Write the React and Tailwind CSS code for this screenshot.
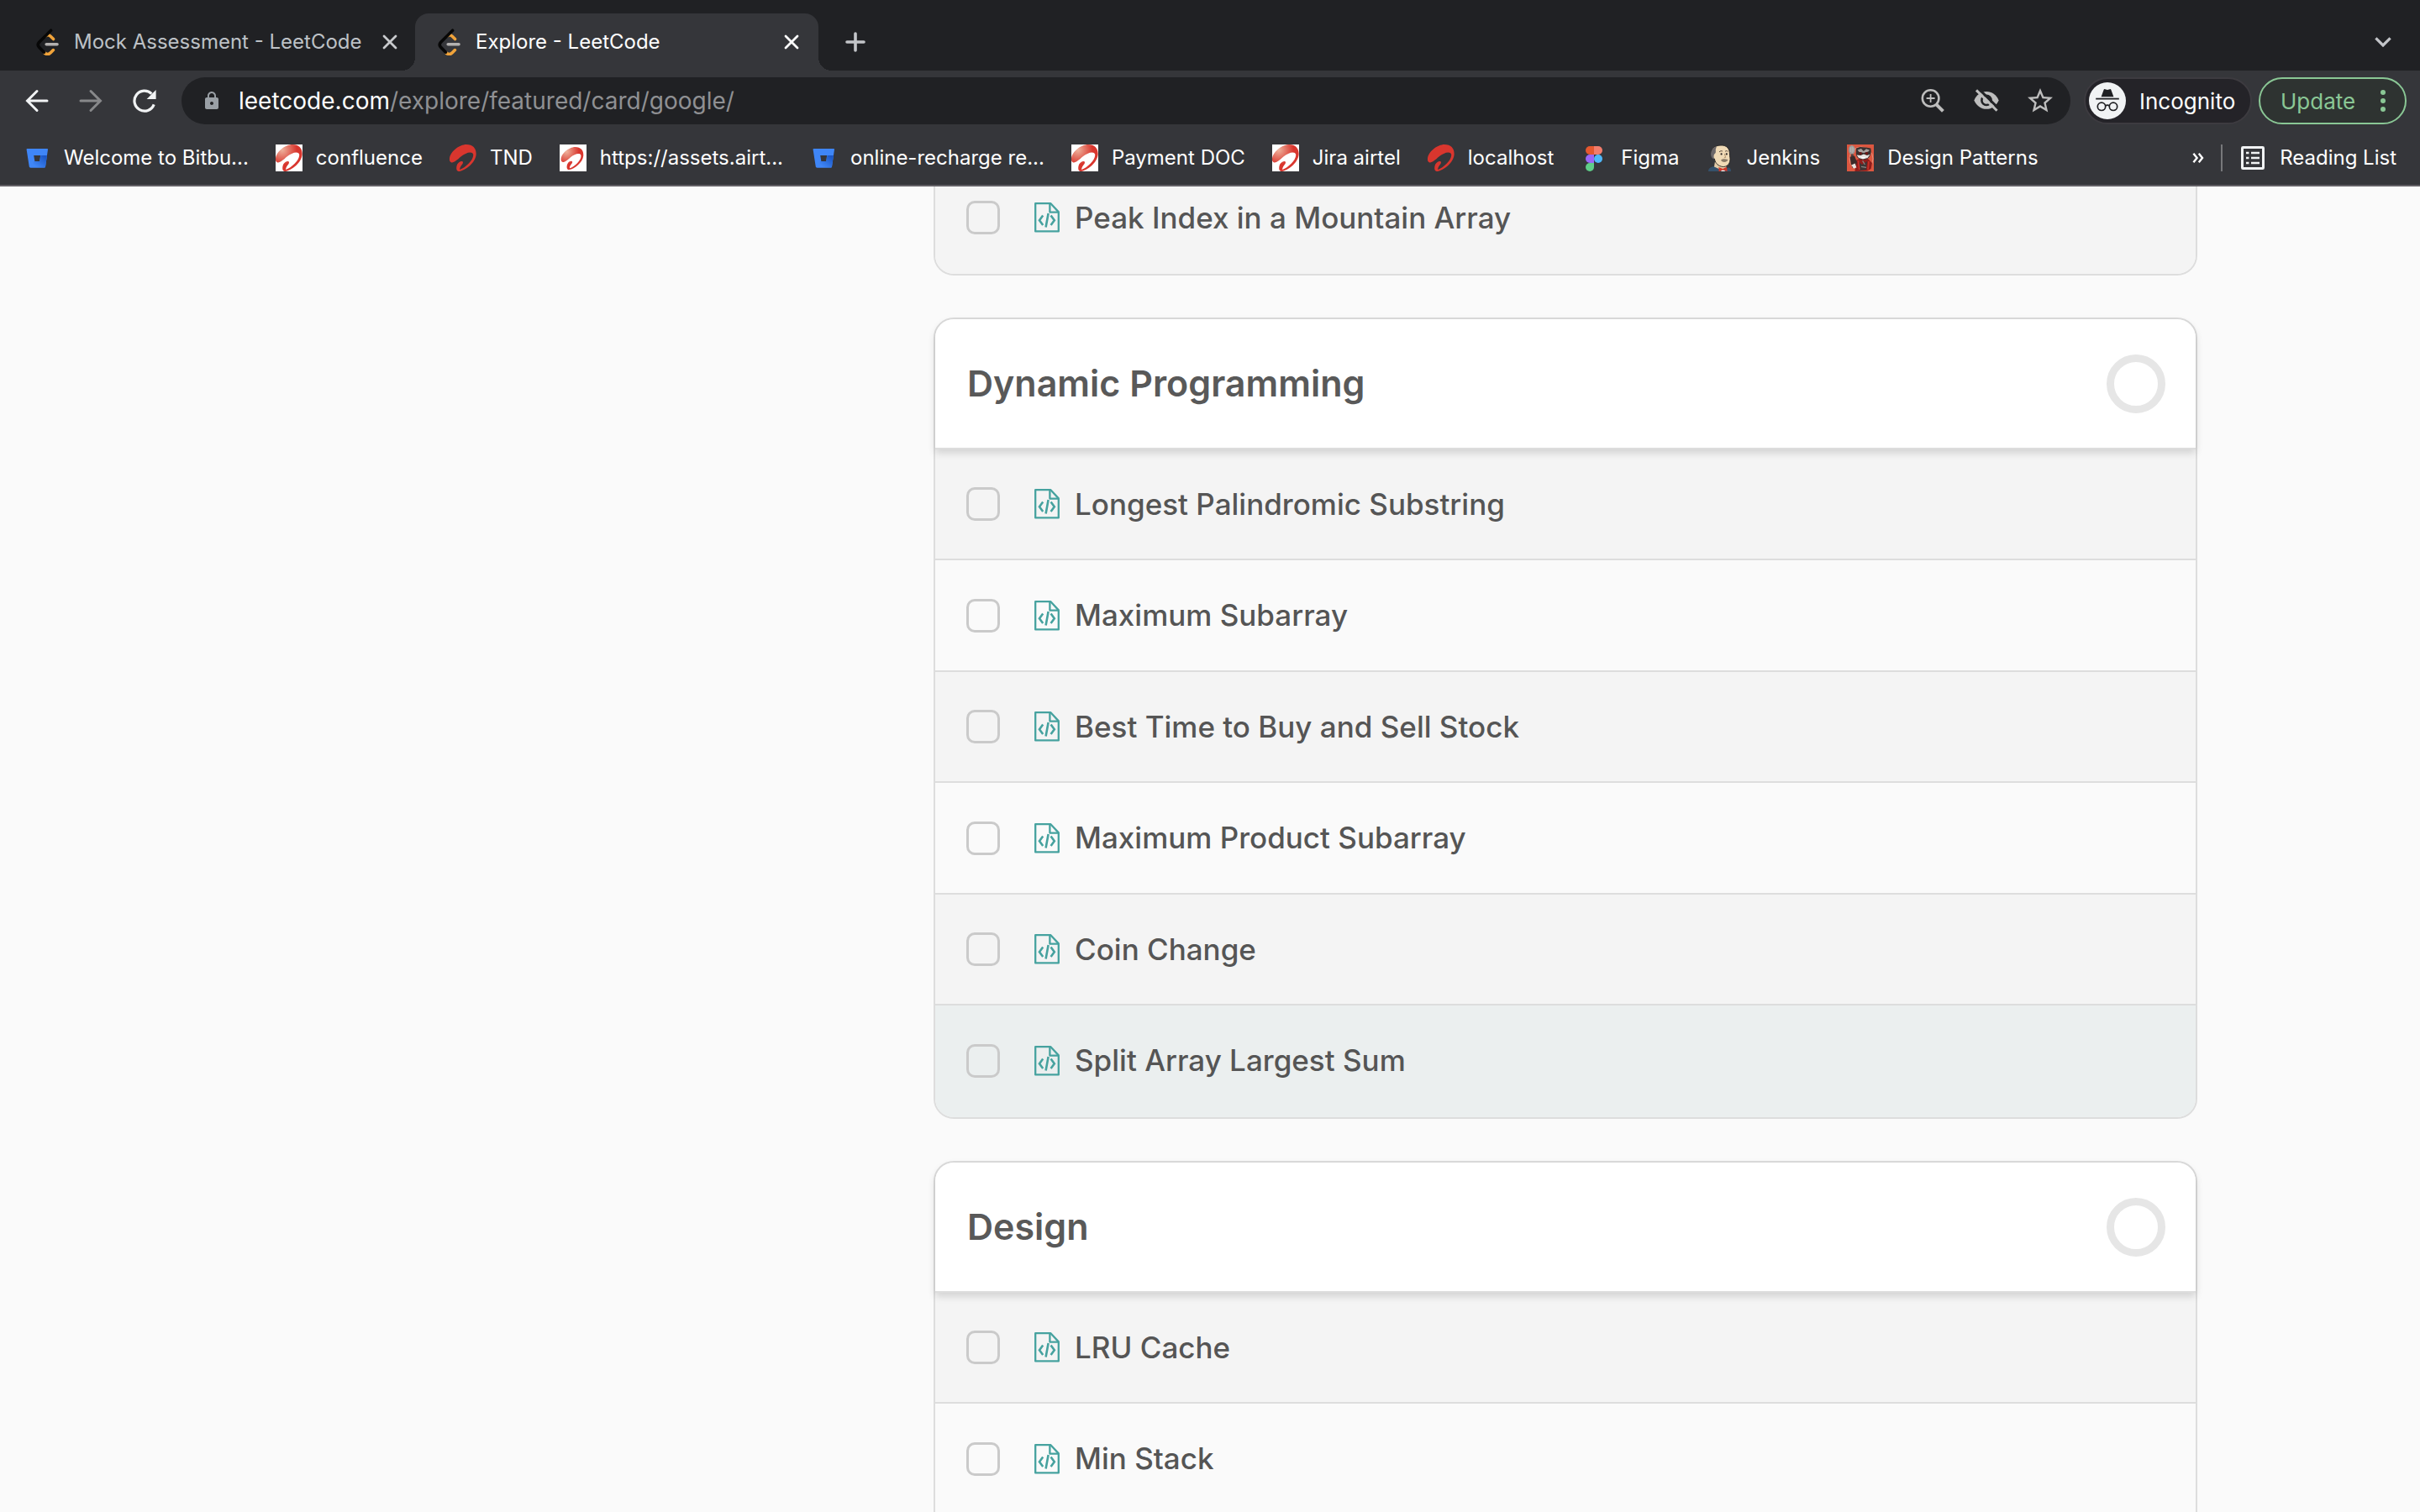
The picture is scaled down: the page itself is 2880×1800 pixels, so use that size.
import { MdLock, MdStarBorder } from "react-icons/md";

const sections = [
  { items: ["Peak Index in a Mountain Array"] },
  {
    title: "Dynamic Programming",
    items: [
      "Longest Palindromic Substring",
      "Maximum Subarray",
      "Best Time to Buy and Sell Stock",
      "Maximum Product Subarray",
      "Coin Change",
      "Split Array Largest Sum",
    ],
    active: "Split Array Largest Sum",
  },
  { title: "Design", items: ["LRU Cache", "Min Stack"], open: true },
];

function LeetCodeIcon() {
  return (
    <svg className="size-8 shrink-0" viewBox="0 0 32 32" fill="none" strokeWidth="3.6" strokeLinecap="round">
      <path d="M13 29C16 31.4 18.8 30.4 20.5 28.6L23.4 25.6" stroke="#f0a33a" />
      <path d="M14.5 8.6C17 6.6 18.5 7.6 20 9L23.6 12.6" stroke="#f0a33a" />
      <path d="M20.6 2.2L6.6 16.2C4.7 18.2 4.9 20.2 6.4 22L12.4 28.2" stroke="#070707" />
      <path d="M15.2 18.8H28" stroke="#b3b1b0" />
    </svg>
  );
}

function CloseIcon({ className }) {
  return (
    <svg className={className} viewBox="0 0 18 18" fill="none" stroke="currentColor" strokeWidth="2.8" strokeLinecap="round">
      <path d="M2 2L16 16M16 2L2 16" />
    </svg>
  );
}

function BitbucketIcon() {
  return (
    <svg className="size-8 shrink-0" viewBox="0 0 32 32">
      <defs>
        <linearGradient id="bb" x1="1" y1="0.2" x2="0.3" y2="0.9">
          <stop offset="0" stopColor="#1a56c4" />
          <stop offset="1" stopColor="#3f86f7" />
        </linearGradient>
      </defs>
      <path d="M4.4 5H28.2Q29.2 5 29 6L26 26.4Q25.9 27.4 24.9 27.4H8Q7 27.4 6.8 26.4L3.6 6Q3.4 5 4.4 5Z" fill="#3f86f7" />
      <path d="M20.5 13H28L26 26.4Q25.9 27.4 24.9 27.4H8L13 19.5H19.4Z" fill="url(#bb)" />
      <path d="M12.2 13H20.2L19 20H13.4Z" fill="#35363a" />
    </svg>
  );
}

const airtelPath =
  "M0 18.5C-1 10 11 0 20 0C28 0 32 5 31.6 12C31 21.5 19 31 11.5 32C7.6 32.4 7.6 27 9.2 23.6C11 20 15.8 18.6 16 21.4C16 23.6 12 26 12.2 30C19 27.6 28.8 18.6 28.2 12C27.4 7.4 19 9.6 13.4 14.6C9 18.6 5 22 2.4 21.4C.8 21 .2 20 0 18.5Z";

function AirtelIcon() {
  return (
    <svg className="size-8 shrink-0" viewBox="0 0 32 32">
      <path d={airtelPath} fill="#d9362e" />
    </svg>
  );
}

function AirtelTileIcon({ small }) {
  return (
    <svg className="size-8 shrink-0 bg-white" viewBox={small ? "0 -3.6 34 38" : "0 0 32 32"}>
      <defs>
        <radialGradient id="airtel" cx="0.25" cy="0.2" r="0.55">
          <stop offset="0" stopColor="#eeb29c" />
          <stop offset="1" stopColor="#d9362e" />
        </radialGradient>
      </defs>
      <path d={airtelPath} fill="url(#airtel)" />
    </svg>
  );
}

function FigmaIcon() {
  return (
    <svg className="size-8 shrink-0" viewBox="0 0 32 32">
      <path d="M16 2V12H11A5 5 0 0 1 11 2Z" fill="#e5582f" />
      <path d="M16 2H21A5 5 0 0 1 21 12H16Z" fill="#f27d6c" />
      <path d="M16 12V22H11A5 5 0 0 1 11 12Z" fill="#9a66f6" />
      <circle cx="21" cy="17" r="5" fill="#4fb8fa" />
      <path d="M16 22V27A5 5 0 1 1 11 22Z" fill="#5fcd88" />
    </svg>
  );
}

function JenkinsIcon() {
  return (
    <svg className="size-8 shrink-0" viewBox="0 0 32 32">
      <path d="M2 32C2.4 27.6 5 27 9 26L20 28.5L27 27.6C28.6 28.6 28.8 30 29 32Z" fill="#35516b" />
      <path d="M9 26.4L10 20H21L24 28L19 31Z" fill="#e3cba6" />
      <path d="M17 1C24 .6 27.6 5.4 27.4 11C27.2 15 28.8 16.6 27.6 20.4C26.6 25 22 27.4 17.6 26.2C12.6 25 10 21 9.4 17C6 16.4 5.2 12.6 5.6 9C6.4 4 10.6 1.2 17 1Z" fill="#f0dab6" stroke="#22201f" strokeWidth="0.9" />
      <path d="M12 2.2C6.6 4 4.6 8.6 5.2 13C5.6 15.6 7 17 9.2 17.4C8 14.4 8.4 12 10 10.8C11.6 9.6 10.4 7 11 5Z" fill="#6b6769" />
      <path d="M15 9C16.4 7.4 18 7.4 19 8.2M22 8.4C23 7.4 24.6 7.4 25.4 8.4" stroke="#5a4a3c" strokeWidth="1" fill="none" />
      <circle cx="17.6" cy="11.4" r="1.1" fill="#2a2422" />
      <circle cx="23.8" cy="11.4" r="1.1" fill="#2a2422" />
      <path d="M21.4 11L22.6 15.4L20.8 15.8" stroke="#a98a64" strokeWidth="0.9" fill="none" />
      <path d="M17 18.8C19 16.6 22 17.2 25.4 18C25 21 19.4 22.4 17 18.8Z" fill="#8a7a66" />
      <path d="M14.4 27L19.2 29L24 26.8L24.6 32L19.4 30.6L14.6 32.4Z" fill="#cf3728" />
      <path d="M18 30.8H21L22.4 32H17Z" fill="#f2f2f2" />
    </svg>
  );
}

function PatternsIcon() {
  return (
    <svg className="size-8 shrink-0" viewBox="0 0 32 32">
      <rect width="32" height="32" fill="#dc5740" />
      <circle cx="17" cy="17" r="14" fill="none" stroke="#e8a08a" strokeWidth="0.8" />
      <path d="M9.5 32L10.4 19L15 17H25L30 22L28.6 29L24 31.6Z" fill="#8f1d1b" />
      <path d="M13 20L18 24L24 20L23 30L15 31Z" fill="#3d3434" />
      <path d="M11 4.4L15.6 3L22.4 3.4L28.4 4.4L28.8 9L27.8 13C26 17 22 18.6 18.6 18C14 18 11 15 10.8 11Z" fill="#3a3130" />
      <path d="M12.6 6.6L17 5L19.8 8L23 5.2L27 6.8L25.4 8.4L20 10L14.6 9Z" fill="#a9a19d" />
      <path d="M11.6 12.4L16.4 13L20 11.4L24 13L27.6 11.8L24.6 16L19 17.6L14 16Z" fill="#e9e3df" />
      <circle cx="16.2" cy="10.6" r="1.7" fill="#6e1714" />
      <circle cx="23.4" cy="10.6" r="1.7" fill="#6e1714" />
      <path d="M16.6 14.4C18.6 15.4 21 15.2 22.6 14.2L21 16.6H18Z" fill="#fff" />
      <ellipse cx="5.8" cy="6.4" rx="3.8" ry="5.4" fill="#9c9996" />
      <path d="M4.4 3.4V9M6.2 2.6V10M8 3.6V8.6" stroke="#c9c6c3" strokeWidth="0.7" />
      <path d="M4.8 11.4H7.6L9.4 26L6.2 28Z" fill="#4a4544" />
      <path d="M3.6 14.8L9 13.6L12 21L9.6 27L5 24Z" fill="#3c2b2a" />
      <path d="M5.4 24.4L9.6 22.6L11.4 27.4L8 28.6Z" fill="#e9e3df" />
      <path d="M18.6 19.4L21.4 24M17 26.4L23 27.4" stroke="#8b8583" strokeWidth="1.2" />
      <path d="M13.4 19L14.8 30M26 20L25 30" stroke="#c92f28" strokeWidth="1.8" />
    </svg>
  );
}

const bookmarks = [
  ["Welcome to Bitbu...", <BitbucketIcon />],
  ["confluence", <AirtelTileIcon />],
  ["TND", <AirtelIcon />],
  ["https://assets.airt...", <AirtelTileIcon small />],
  ["online-recharge re...", <BitbucketIcon />],
  ["Payment DOC", <AirtelTileIcon />],
  ["Jira airtel", <AirtelTileIcon />],
  ["localhost", <AirtelIcon />],
  ["Figma", <FigmaIcon />],
  ["Jenkins", <JenkinsIcon />],
  ["Design Patterns", <PatternsIcon />],
];

function TabStrip() {
  return (
    <div className="flex h-[84px] items-end bg-[#202124] text-2xl">
      <div className="flex h-[68px] w-[494px] items-center pr-5 pl-10">
        <LeetCodeIcon />
        <span className="ml-4 flex-1 whitespace-nowrap text-[#bdc1c6]">Mock Assessment - LeetCode</span>
        <button aria-label="Close tab" className="grid size-5 place-items-center text-[#c8cacd]">
          <CloseIcon className="size-[18px]" />
        </button>
      </div>
      <div className="relative flex h-[68px] w-[480px] items-center rounded-t-2xl bg-[#35363a] pr-[22px] pl-6 before:absolute before:bottom-0 before:-left-4 before:size-4 before:bg-[radial-gradient(circle_at_0_0,transparent_16px,#35363a_16px)] after:absolute after:-right-4 after:bottom-0 after:size-4 after:bg-[radial-gradient(circle_at_100%_0,transparent_16px,#35363a_16px)]">
        <LeetCodeIcon />
        <span className="ml-4 flex-1 whitespace-nowrap text-white">Explore - LeetCode</span>
        <button aria-label="Close tab" className="grid size-5 place-items-center text-white">
          <CloseIcon className="size-[18px]" />
        </button>
      </div>
      <button aria-label="New tab" className="ml-8 grid h-[68px] w-6 place-items-center text-[#c3c5c9]">
        <svg className="size-6" viewBox="0 0 24 24" stroke="currentColor" strokeWidth="3.6" strokeLinecap="round">
          <path d="M12 2V22M2 12H22" />
        </svg>
      </button>
      <button aria-label="Search tabs" className="mr-8 ml-auto grid h-[68px] w-6 place-items-center text-[#c3c5c9]">
        <svg className="h-3 w-5" viewBox="0 0 20 12" fill="none" stroke="currentColor" strokeWidth="3.2">
          <path d="M1.4 1.4L10 10L18.6 1.4" />
        </svg>
      </button>
    </div>
  );
}

function Toolbar() {
  return (
    <div className="flex h-[72px] items-center bg-[#35363a] pr-4 pl-7 text-[26px]">
      <button aria-label="Back" className="grid size-8 place-items-center text-[#f1f3f4]">
        <svg className="size-7" viewBox="0 0 28 28" fill="none" stroke="currentColor" strokeWidth="3" strokeLinecap="round">
          <path d="M26 14H3M14 2.5L2.5 14L14 25.5" />
        </svg>
      </button>
      <button aria-label="Forward" className="ml-8 grid size-8 place-items-center text-[#87888a]">
        <svg className="size-7" viewBox="0 0 28 28" fill="none" stroke="currentColor" strokeWidth="3" strokeLinecap="round">
          <path d="M2 14H25M14 2.5L25.5 14L14 25.5" />
        </svg>
      </button>
      <button aria-label="Reload" className="ml-8 grid size-8 place-items-center text-[#f1f3f4]">
        <svg className="size-7" viewBox="0 0 28 28" fill="none" stroke="currentColor" strokeWidth="3.2">
          <path d="M22.4 5.6A12 12 0 1 0 25.2 18.4" />
          <path d="M27.6 1V12H16.6Z" fill="currentColor" stroke="none" />
        </svg>
      </button>
      <div className="ml-7 flex h-14 flex-1 items-center rounded-full bg-[#202124] pr-[18px] pl-6 text-[28px] text-[#bdbdbd]">
        <button aria-label="Site information" className="text-[#9aa0a6]">
          <MdLock className="size-6" />
        </button>
        <div role="textbox" aria-label="Address" tabIndex={0} className="ml-5 flex-1 text-[#8f9093]">
          <span className="text-white">leetcode.com</span>/explore/featured/card/google/
        </div>
        <button aria-label="Zoom" className="grid size-9 place-items-center">
          <svg className="size-8" viewBox="0 0 32 32" fill="none" stroke="currentColor">
            <circle cx="13.6" cy="13" r="9.8" strokeWidth="2.6" />
            <path d="M20.4 20.4L28.4 28.4" strokeWidth="4" />
            <path d="M13.6 8V18M8.6 13H18.6" strokeWidth="1.8" />
          </svg>
        </button>
        <button aria-label="Third-party cookies blocked" className="ml-7 grid size-9 place-items-center">
          <svg className="size-8" viewBox="0 0 32 32" fill="none">
            <path d="M1.4 15.4C4 9 9.6 5 16 5S28 9 30.6 15.4C28 21.8 22.4 25.8 16 25.8S4 21.8 1.4 15.4Z" fill="currentColor" />
            <circle cx="16" cy="15.4" r="5.6" stroke="#202124" strokeWidth="2.6" />
            <path d="M6.6 1.6L31.6 26.2" stroke="#202124" strokeWidth="3" />
            <path d="M4 3.4L28.6 27.8" stroke="currentColor" strokeWidth="3" />
          </svg>
        </button>
        <button aria-label="Bookmark this tab" className="ml-7 grid size-9 place-items-center">
          <MdStarBorder className="size-9" />
        </button>
      </div>
      <button className="ml-4 flex h-14 w-[200px] items-center rounded-full border-2 border-[#3d3b40] bg-[#242328] pl-1 text-white">
        <svg className="size-11" viewBox="0 0 44 44" fill="none">
          <circle cx="22" cy="22" r="22" fill="#f1f3f4" />
          <path d="M14.6 17.2L17.6 9Q18 7.8 19.2 8.2L22 9L24.8 8.2Q26 7.8 26.4 9L29.4 17.2Z" fill="#202124" />
          <path d="M8.2 19.6H35.8" stroke="#202124" strokeWidth="1.8" />
          <g stroke="#202124" strokeWidth="1.7">
            <circle cx="15" cy="28.8" r="4.7" />
            <circle cx="29" cy="28.8" r="4.7" />
            <path d="M19.6 28Q22 26.4 24.4 28" />
          </g>
        </svg>
        <span className="ml-4">Incognito</span>
      </button>
      <button className="ml-2 flex h-14 w-[176px] items-center justify-between rounded-full border-2 border-[#8ac795] bg-[#2e3331] pr-[23px] pl-6 text-[#8ac795]">
        Update
        <svg className="h-7 w-1.5" viewBox="0 0 6 28" fill="currentColor">
          <circle cx="3" cy="4" r="3" />
          <circle cx="3" cy="14" r="3" />
          <circle cx="3" cy="24" r="3" />
        </svg>
      </button>
    </div>
  );
}

function BookmarksBar() {
  return (
    <nav className="flex h-[66px] items-center border-b-2 border-[#626065] bg-[#35363a] px-7 text-2xl text-white">
      <div className="flex gap-8">
        {bookmarks.map(([label, icon]) => (
          <a key={label} href="#" className="flex items-center gap-4 whitespace-nowrap">
            {icon}
            {label}
          </a>
        ))}
      </div>
      <button aria-label="More bookmarks" className="ml-auto">
        <svg className="h-3 w-3.5" viewBox="0 0 14 12" fill="none" stroke="currentColor" strokeWidth="2.4">
          <path d="M1.4 .8L5.6 6L1.4 11.2M7.8 .8L12 6L7.8 11.2" />
        </svg>
      </button>
      <span className="ml-5 h-8 w-0.5 bg-[#77787b]" />
      <button className="ml-[22px] flex items-center gap-[18px]">
        <svg className="size-7" viewBox="0 0 28 28" fill="none" stroke="#f1f3f4">
          <rect x="1.5" y="1.5" width="25" height="25" rx="0.8" strokeWidth="3" />
          <path d="M6 8H9.4M12 8H22M6 14H9.4M12 14H22M6 20H9.4M12 20H22" strokeWidth="2.6" />
        </svg>
        Reading List
      </button>
    </nav>
  );
}

function CodeFileIcon() {
  return (
    <svg className="h-9 w-[30px] shrink-0" viewBox="0 0 30 36" fill="none" stroke="#46a29f" strokeWidth="2.3" strokeLinejoin="round">
      <path d="M1.2 1.2H19.4L28.8 11.4V34.4H1.2Z" />
      <path d="M18.4 1.2V11.6H28.8" />
      <path d="M10.2 15.4L6 21.2L10.2 27M19.6 15.4L23.8 21.2L19.6 27M16.6 13L13.6 29.6" strokeWidth="2.6" strokeLinejoin="miter" />
    </svg>
  );
}

function ProblemRow({ title, active }) {
  return (
    <li className="h-[132px] border-b-2 border-[#dddddd] bg-[#f4f4f4] last:border-transparent even:h-[133px] even:bg-[#fafafa] has-[[data-active]]:bg-[#ebefef]">
      <label data-active={active || undefined} className="flex h-full items-center pl-[37px]">
        <input type="checkbox" className="size-10 shrink-0 appearance-none rounded-[10px] border-[3px] border-[#cacaca]" />
        <span className="ml-[41px] flex items-center gap-[18px]">
          <CodeFileIcon />
          {title}
        </span>
      </label>
    </li>
  );
}

function Chapter({ title, items, active, open }) {
  return (
    <section className={open ? "rounded-t-3xl border-2 border-b-0 border-[#dddddd]" : "rounded-3xl border-2 border-[#dddddd]"}>
      {title && (
        <header className="relative flex h-[155px] items-center justify-between rounded-t-[22px] border-b-2 border-[#dddddd] bg-white pr-9 pl-[38px] shadow-[0_4px_10px_rgba(0,0,0,0.15)]">
          <h2 className="text-[43px] font-semibold text-[#595959]">{title}</h2>
          <span role="progressbar" aria-label={title + " progress"} aria-valuenow={0} className="size-[70px] rounded-full border-9 border-[#e6e6e6]" />
        </header>
      )}
      <ul className={open ? "overflow-hidden" : "overflow-hidden rounded-b-[22px]"}>
        {items.map((item) => (
          <ProblemRow key={item} title={item} active={item === active} />
        ))}
      </ul>
    </section>
  );
}

export default function App() {
  return (
    <div className="flex h-screen flex-col overflow-hidden bg-[#fafafa] font-['Inter',sans-serif]">
      <div className="shrink-0">
        <TabStrip />
        <Toolbar />
        <BookmarksBar />
      </div>
      <main className="min-h-0 flex-1 overflow-hidden">
        <div className="mx-auto -mt-[30px] grid max-w-[2350px] grid-cols-[36fr_64fr]">
          <div className="col-start-2 flex flex-col gap-[50px] text-[35px] font-medium text-[#555555]">
            {sections.map((section) => (
              <Chapter key={section.items[0]} {...section} />
            ))}
          </div>
        </div>
      </main>
    </div>
  );
}
